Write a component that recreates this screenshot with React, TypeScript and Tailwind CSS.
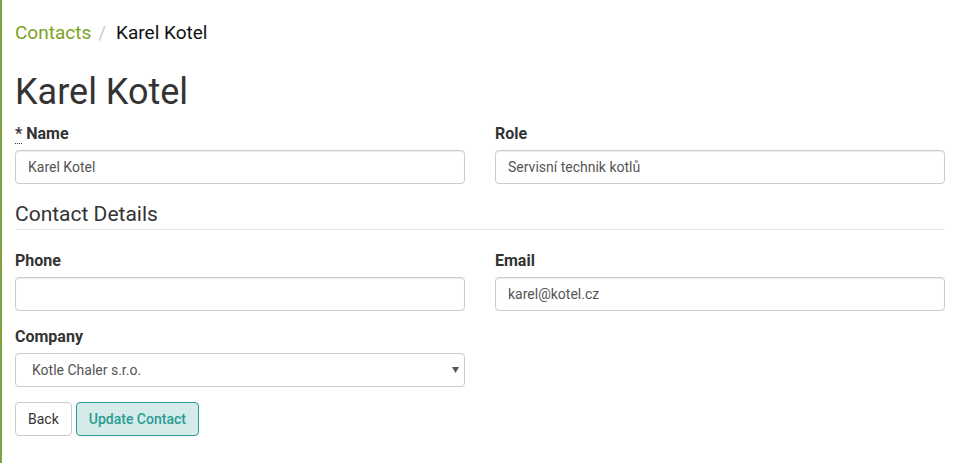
import { useState } from "react";

function Field({ label, value, required }: { label: string; value: string; required?: boolean }) {
  return (
    <div className="flex flex-col">
      <label className="h-[22px] pt-px text-[16px] leading-[22px] font-bold text-[#333]">
        {required && (
          <abbr title="required" className="no-underline border-b border-dotted border-[#333] mr-1">*</abbr>
        )}
        {label}
      </label>
      <input
        type="text"
        defaultValue={value}
        className="mt-[6px] h-[34px] w-full rounded border border-[#ccc] px-3 text-[14px] text-[#555] shadow-[inset_0_1px_1px_rgba(0,0,0,0.075)] outline-none"
      />
    </div>
  );
}

export default function App() {
  const [company, setCompany] = useState("1");

  return (
    <div className="min-h-[463px] border-l-2 border-[#7fa33f] bg-white pl-[13px] pr-[17px] pt-5 font-['Roboto',sans-serif] text-[#333]">
      <nav className="flex h-[25px] items-center text-[19px] leading-[25px]">
        <span className="text-[#7ca11f]">Contacts</span>
        <span className="px-[7px] text-[#ccc]">/</span>
        <span className="ml-[3px] text-[#111]">Karel Kotel</span>
      </nav>

      <h1 className="mt-[27px] h-[40px] text-[36px] leading-[40px] font-normal">Karel Kotel</h1>

      <div className="mt-[10px] grid grid-cols-2 gap-x-[30px]">
        <Field label="Name" value="Karel Kotel" required />
        <Field label="Role" value="Servisní technik kotlů" />
      </div>

      <h3 className="mt-[19px] h-[22px] text-[21px] leading-[22px] font-normal">Contact Details</h3>
      <hr className="mt-[4px] border-t border-[#e5e5e5]" />

      <div className="mt-[19px] grid grid-cols-2 gap-x-[30px]">
        <Field label="Phone" value="" />
        <Field label="Email" value="karel@kotel.cz" />
      </div>

      <div className="mt-[14px] grid grid-cols-2 gap-x-[30px]">
        <div className="flex flex-col">
          <label className="h-[22px] pt-px text-[16px] leading-[22px] font-bold">Company</label>
          <div className="relative mt-[6px]">
            <select
              value={company}
              onChange={(e) => setCompany(e.target.value)}
              className="h-[34px] w-full appearance-none rounded border border-[#ccc] bg-white pl-4 text-[14px] text-[#555] outline-none"
            >
              <option value="1">Kotle Chaler s.r.o.</option>
            </select>
            <svg className="pointer-events-none absolute right-[6px] top-[14px]" width="7" height="6" viewBox="0 0 7 6">
              <path d="M0 0h7L3.5 6z" fill="#555" />
            </svg>
          </div>
        </div>
      </div>

      <div className="mt-[15px] flex gap-[4px]">
        <button className="h-[34px] rounded border border-[#ccc] bg-white px-3 text-[14px] text-[#333]">Back</button>
        <button className="h-[34px] rounded border border-[#2b9b94] bg-[#d5ebe9] px-3 text-[14px] font-medium text-[#2b9b94]">
          Update Contact
        </button>
      </div>
    </div>
  );
}
